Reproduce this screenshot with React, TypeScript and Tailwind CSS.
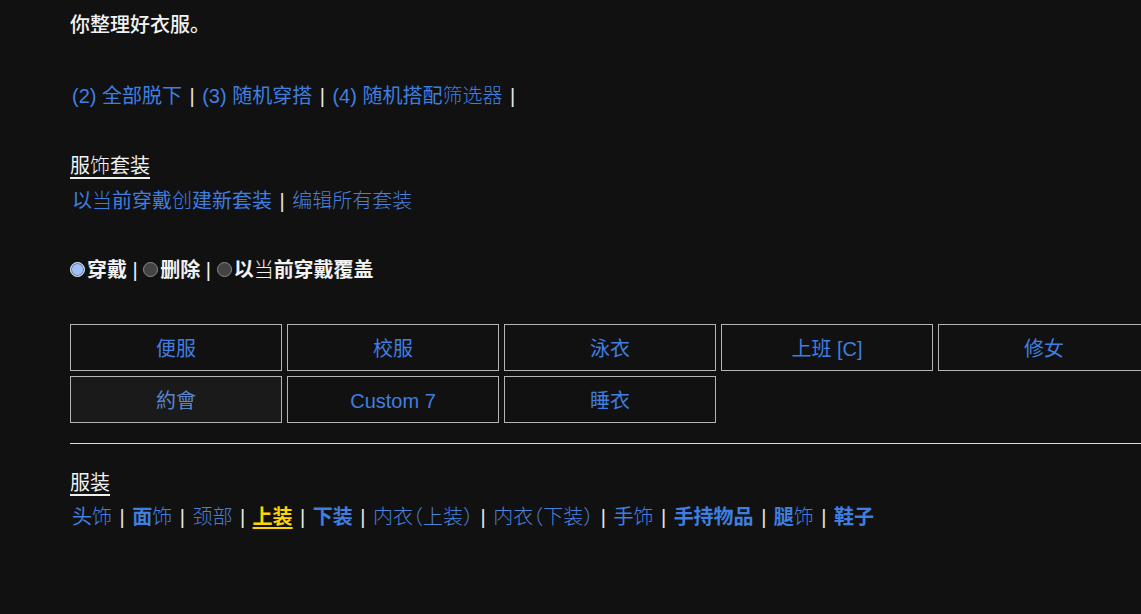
import React from "react";

const F = { fontFamily: '"Liberation Sans", "Noto Sans CJK SC", sans-serif' };

function Sep() {
  return <span className="inline-block mx-[7.5px] text-[#e6e6e6] font-normal">|</span>;
}

function Radio({ checked }: { checked?: boolean }) {
  return checked ? (
    <span className="inline-block w-[15px] h-[15px] rounded-full bg-[#9dc1f7] border-[1.5px] border-[#dfe8f5] shadow-[inset_0_0_0_1px_#5f7595] mr-[2px] align-[0px]" />
  ) : (
    <span className="inline-block w-[15px] h-[15px] rounded-full bg-[#434343] border-[1.5px] border-[#8a8a8a] mr-[2px] align-[0px]" />
  );
}

const outfits = ["便服", "校服", "泳衣", "上班 [C]", "修女", "約會", "Custom 7", "睡衣"];

export default function App() {
  return (
    <div
      className="w-[1141px] h-[614px] overflow-hidden bg-[#111111] text-[20px] leading-[24px]"
      style={F}
    >
      <div className="pl-[70px] pt-[13px] w-[1200px] flex flex-col">
        <div className="text-[#f2f2f2] font-medium h-[24px]">你整理好衣服。</div>

        <div className="mt-[47px] h-[24px] pl-[2px] text-[#3f7fe0]">
          <span>(2) 全部脱下</span>
          <Sep />
          <span>(3) 随机穿搭</span>
          <Sep />
          <span>(4) 随机搭配</span>
          <span className="font-light">筛选器</span>
          <Sep />
        </div>

        <div className="mt-[46px] h-[24px]">
          <span className="text-[#f0f0f0] underline underline-offset-[4px]">
            服<span className="font-light">饰</span>套装
          </span>
        </div>

        <div className="mt-[11px] h-[24px] pl-[2px] text-[#3f7fe0]">
          <span>以</span>
          <span className="font-light">当</span>
          <span>前穿戴</span>
          <span className="font-light">创</span>
          <span>建新套装</span>
          <Sep />
          <span className="font-light text-[#4a7fd6]">编辑所有套装</span>
        </div>

        <div className="mt-[45px] h-[24px] text-[#f2f2f2] font-bold">
          <Radio checked />
          <span>穿戴</span>
          <span className="font-normal"> | </span>
          <Radio />
          <span>删除</span>
          <span className="font-normal"> | </span>
          <Radio />
          <span>以</span>
          <span className="font-light">当</span>
          <span>前穿戴覆盖</span>
        </div>

        <div className="mt-[42px] grid grid-cols-[repeat(5,212px)] gap-[5px]">
          {outfits.map((o, i) => (
            <div
              key={o}
              className={`h-[47px] pt-[2px] border border-[#b4b4b4] flex items-center justify-center ${
                i === 5 ? "bg-[#1a1a1a] text-[#5a86c9]" : "bg-[#111111] text-[#3f7fe0]"
              }`}
            >
              {o}
            </div>
          ))}
        </div>

        <div className="mt-[20px] h-px bg-[#dcdcdc] w-[1130px]" />

        <div className="mt-[27px] h-[24px]">
          <span className="text-[#f0f0f0] underline underline-offset-[4px]">服装</span>
        </div>

        <div className="mt-[10px] h-[24px] pl-[2px] text-[#3f7fe0]">
          <span>头</span>
          <span className="font-light">饰</span>
          <Sep />
          <span className="font-bold">面</span>
          <span className="font-light">饰</span>
          <Sep />
          <span className="font-light text-[#4a7fd6]">颈部</span>
          <Sep />
          <span className="font-bold text-[#ffd400] underline decoration-2 underline-offset-[3px]">上装</span>
          <Sep />
          <span className="font-bold">下装</span>
          <Sep />
          <span className="font-light text-[#4a82dc] [font-feature-settings:'halt']">内衣（上装）</span>
          <Sep />
          <span className="font-light text-[#4a82dc] [font-feature-settings:'halt']">内衣（下装）</span>
          <Sep />
          <span>手</span>
          <span className="font-light">饰</span>
          <Sep />
          <span className="font-bold">手持物品</span>
          <Sep />
          <span className="font-bold">腿</span>
          <span className="font-light">饰</span>
          <Sep />
          <span className="font-bold">鞋子</span>
        </div>
      </div>
    </div>
  );
}
